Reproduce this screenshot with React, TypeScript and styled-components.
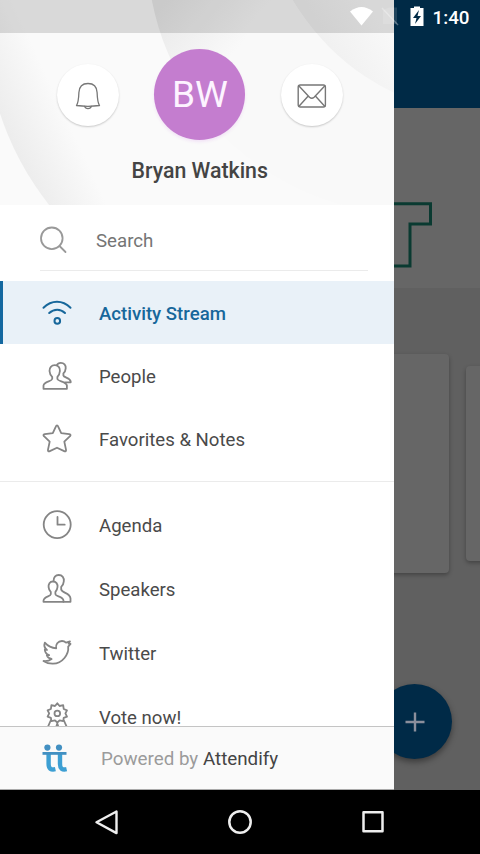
import React from "react";
import styled, { createGlobalStyle } from "styled-components";

const GlobalStyle = createGlobalStyle`
  * { box-sizing: border-box; }
  body { margin: 0; background: #000; font-family: Roboto, sans-serif; }
`;

const Phone = styled.div`
  display: flex;
  flex-direction: column;
  width: 480px;
  height: 854px;
  overflow: hidden;
  background: #000;
`;

const Screen = styled.div`
  position: relative;
  height: 790px;
  overflow: hidden;
`;

/* Dimmed page under the drawer */
const Page = styled.main`
  display: flex;
  flex-direction: column;
  height: 100%;
  background: #606060;
`;

const AppBar = styled.div`
  flex: 0 0 108px;
  background: #002a46;
`;

const Banner = styled.div`
  display: flex;
  flex: 0 0 180px;
  justify-content: flex-end;
  align-items: flex-start;
  padding: 94px 47px 0 0;
  background: #666;
`;

const Cards = styled.div`
  display: flex;
  align-items: flex-start;
  gap: 17px;
  width: 560px;
  padding: 66px 0 0 49px;
`;

const Card = styled.div<{ $small?: boolean }>`
  flex: 0 0 ${(p) => (p.$small ? 300 : 400)}px;
  height: ${(p) => (p.$small ? 195 : 219)}px;
  margin-top: ${(p) => (p.$small ? 12 : 0)}px;
  border-radius: 4px;
  background: #666;
  box-shadow: 0 2px 4px rgba(0, 0, 0, 0.3);
`;

const Fab = styled.div`
  position: absolute;
  left: 377px;
  top: 684px;
  display: flex;
  align-items: center;
  justify-content: center;
  width: 75px;
  height: 75px;
  border-radius: 50%;
  background: #002a47;
  box-shadow: 0 3px 6px rgba(0, 0, 0, 0.4);
`;

const Drawer = styled.aside`
  position: absolute;
  left: 0;
  top: 0;
  display: flex;
  flex-direction: column;
  width: 394.4px;
  height: 790px;
  background: #fff;
`;

const Profile = styled.header`
  position: relative;
  flex: 0 0 205px;
  display: flex;
  flex-direction: column;
  align-items: center;
  padding-top: 49px;
  background: #fafafa;
  overflow: hidden;
`;

const Swirl = styled.svg`
  position: absolute;
  left: 0;
  top: 0;
`;

const ProfileRow = styled.div`
  position: relative;
  display: flex;
  align-items: center;
  gap: 35.5px;
  margin-left: 5.6px;
`;

const RoundButton = styled.button`
  display: flex;
  align-items: center;
  justify-content: center;
  width: 62px;
  height: 62px;
  margin-top: 1px;
  padding: 1px 0 0;
  border: 0;
  border-radius: 50%;
  background: #fff;
  box-shadow: 0 1px 2px rgba(0, 0, 0, 0.2);
`;

const Avatar = styled.div`
  display: flex;
  align-items: center;
  justify-content: center;
  width: 91px;
  height: 91px;
  border-radius: 50%;
  background: #c47dcf;
  box-shadow: 0 2px 3px rgba(240, 222, 245, 0.8);
  color: #fdf3ff;
  font-size: 37px;
  line-height: 1;
`;

const UserName = styled.div`
  position: relative;
  margin: 17.5px 0 0 5px;
  color: #444;
  font-size: 21.3px;
  line-height: 26px;
  font-weight: 500;
`;

const SearchRow = styled.div`
  display: flex;
  align-items: center;
  flex: 0 0 66px;
  margin: 0 26px 10px 40px;
  padding-top: 5px;
  border-bottom: 1.5px solid #ebebeb;
  color: #757575;
  font-size: 18.7px;
`;

const SearchIcon = styled.span`
  display: flex;
  width: 56px;
`;

const Group = styled.nav<{ $second?: boolean }>`
  display: flex;
  flex-direction: column;
  flex: ${(p) => (p.$second ? "0 0 245px" : "0 0 201px")};
  padding-top: ${(p) => (p.$second ? 11 : 0)}px;
  border-bottom: ${(p) => (p.$second ? "1px solid #c4c4c4" : "1.5px solid #ebebeb")};
  overflow: hidden;
`;

const Item = styled.a<{ $active?: boolean; $height: number }>`
  display: flex;
  flex: 0 0 ${(p) => p.$height}px;
  align-items: center;
  padding-left: ${(p) => (p.$active ? 39 : 42)}px;
  border-left: ${(p) => (p.$active ? "3px solid #1468a0" : "0")};
  background: ${(p) => (p.$active ? "#e9f1f8" : "transparent")};
  color: ${(p) => (p.$active ? "#17679b" : "#4a4a4a")};
  font-size: 18.6px;
  font-weight: ${(p) => (p.$active ? 500 : 400)};
`;

const ItemIcon = styled.span`
  display: flex;
  width: 57px;
`;

const ItemLabel = styled.span<{ $drop: number }>`
  padding-top: ${(p) => p.$drop}px;
`;

const Footer = styled.footer`
  display: flex;
  flex: 1;
  align-items: center;
  padding: 1px 0 0 42px;
  border-bottom: 1px solid #aaa;
  background: #fafafa;
  color: #9b9b9b;
  font-size: 18.8px;
`;

const LogoBox = styled.span`
  display: flex;
  width: 59px;
`;

const Brand = styled.span`
  color: #444;
`;

const StatusBar = styled.div`
  position: absolute;
  left: 0;
  top: 0;
  display: flex;
  width: 394.4px;
  height: 33px;
  background: rgba(0, 0, 0, 0.13);
`;

const StatusIcons = styled.div`
  position: absolute;
  right: 10.5px;
  top: 0;
  display: flex;
  align-items: center;
  height: 34px;
  color: #fff;
  font-size: 18.8px;
  font-weight: 500;
`;

const Clock = styled.span`
  margin-left: 6.5px;
  padding-top: 1px;
`;

const NavBar = styled.div`
  display: flex;
  flex: 0 0 64px;
  align-items: center;
  justify-content: space-between;
  padding: 0 94px;
`;

const Line = ({ children, w = 30, h = 30, color = "#858585", sw = 1.8 }: {
  children: React.ReactNode; w?: number; h?: number; color?: string; sw?: number;
}) => (
  <svg width={w} height={h} viewBox={`0 0 ${w} ${h}`} fill="none" stroke={color}
    strokeWidth={sw} strokeLinecap="round" strokeLinejoin="round">
    {children}
  </svg>
);

const StreamIcon = () => (
  <Line color="#17679b" sw={2}>
    <path d="M1.5 9.7C9.5 1.8 20.5 1.8 28.5 9.7" />
    <path d="M7.2 15C12 10.5 18.5 10.5 23 15" />
    <circle cx="15.3" cy="22.9" r="2.8" />
  </Line>
);

const PeopleIcon = () => (
  <Line>
    <path d="M12.8 4.2C16.2 4.2 18.2 6.5 17.9 10C17.7 12.8 16.7 14.7 15.4 15.9V18C15.7 20.4 24.3 20.6 24.9 24.5V27.8H1.5V24.5C2 20.6 9.9 20.4 10.2 18V15.9C8.7 14.6 7.7 12.8 7.5 10C7.3 6.5 9.5 4.2 12.8 4.2Z" />
    <path d="M14.7 4.4C15.5 2.7 16.8 1.8 18.8 1.8C22 1.8 24 4.2 23.7 7.3C23.5 9.8 22.6 11.3 21.4 12.4V14.5C21.8 16.7 28.4 16.9 28.7 20.6V21.3H23" />
  </Line>
);

const StarIcon = () => (
  <Line>
    <path d="M15 1.3C15.6 1.3 16 2.1 16.3 2.9L19.2 9.2L27.2 10.2C28.9 10.5 28.8 11.5 28 12.2L22.3 17.6L24 25.6C24.3 27.3 23.4 27.8 22.2 27.1L15 23.7L7.8 27.1C6.6 27.8 5.7 27.3 6 25.6L7.7 17.6L2 12.2C1.2 11.5 1.1 10.5 2.8 10.2L10.8 9.2L13.7 2.9C14 2.1 14.4 1.3 15 1.3Z" />
  </Line>
);

const ClockIcon = () => (
  <Line>
    <circle cx="15.2" cy="14.6" r="13.5" />
    <path d="M15.5 7V14.7H22.7" />
  </Line>
);

const SpeakersIcon = () => (
  <Line>
    <path d="M10.9 7.5C14.2 7.5 15.9 10 15.5 13.2C15.2 15.5 14.4 17 13.4 18V20.3C13.6 22.7 21.4 22.3 21.5 26.8V27.8H1.5V26.8C1.8 22.3 8.6 22.7 8.8 20.3V18C7.6 17 6.8 15.5 6.6 13.2C6.3 10 7.7 7.5 10.9 7.5Z" />
    <path d="M11.6 7C11.5 3.3 13.5 1 16.7 1C20.3 1 22.3 3.8 21.8 7.3C21.5 10.1 20.5 11.8 19.2 12.9V15.5C20 19.3 28 18.8 28.5 24.3V27.8H21.5" />
  </Line>
);

const TwitterIcon = () => (
  <Line>
    <path d="M2.8 4.7C5.9 8.2 9.8 10.1 14.2 10.3C13.3 6.7 15.9 3 20 3C21.8 3 23.1 3.8 24 4.6L28 3.4L26.6 5.7L28.5 6L26.2 8.7C27 16.2 20.5 25.7 11 25.7C7.3 25.8 4 24.8 1.5 23C4.8 23.4 7.4 22.7 9.6 21C7 20.7 5.5 19.3 4.8 17.3L7.1 17.2C4.2 16.1 2.7 14 2.8 11.3L5 11.9C2.5 10 1.7 7.6 2.8 4.7Z" />
  </Line>
);

const BadgeIcon = () => (
  <Line>
    <path d="M15.3 1.3L17.6 4L21.2 3.2L21.7 7L25 8.3L23.4 11.4L25 14.6L21.7 15.8L21.2 19.2L17.6 18.3L15.3 20.5L13 18.3L9.4 19.2L8.9 15.8L5.6 14.6L7.2 11.4L5.6 8.3L8.9 7L9.4 3.2L13 4Z" />
    <circle cx="15.3" cy="11.4" r="2.8" />
    <path d="M8.7 18.5L5 27L10 25L12.5 30L15.3 21.5L18 30L20.7 25L25.7 27L21.9 18.5" />
  </Line>
);

const items1 = [
  { label: "Activity Stream", icon: <StreamIcon />, active: true },
  { label: "People", icon: <PeopleIcon /> },
  { label: "Favorites & Notes", icon: <StarIcon /> },
];
const items2 = [
  { label: "Agenda", icon: <ClockIcon /> },
  { label: "Speakers", icon: <SpeakersIcon /> },
  { label: "Twitter", icon: <TwitterIcon /> },
  { label: "Vote now!", icon: <BadgeIcon /> },
];

export default function App() {
  return (
    <>
      <GlobalStyle />
      <Phone>
        <Screen>
          <Page>
            <AppBar />
            <Banner>
              <svg width="60" height="68" fill="none" stroke="#0a3a31" strokeWidth="3">
                <path d="M0 1.8H57.5V22H37V64H0" />
              </svg>
            </Banner>
            <Cards>
              <Card />
              <Card $small />
            </Cards>
          </Page>
          <Fab>
            <svg width="20" height="20" stroke="#8b8f9c" strokeWidth="2.4">
              <path d="M10 0.5V19.5M0.5 10H19.5" />
            </svg>
          </Fab>
          <Drawer>
            <Profile>
              <Swirl width="395" height="205">
                <defs>
                  <linearGradient id="bandA" gradientUnits="userSpaceOnUse" x1="-10" y1="110" x2="50" y2="82">
                    <stop offset="0" stopColor="#ebebeb" />
                    <stop offset="1" stopColor="#fafafa" />
                  </linearGradient>
                  <linearGradient id="bandB" gradientUnits="userSpaceOnUse" x1="150" y1="20" x2="215" y2="75">
                    <stop offset="0" stopColor="#e9e9e9" />
                    <stop offset="1" stopColor="#f9f9f9" />
                  </linearGradient>
                  <linearGradient id="bandC" gradientUnits="userSpaceOnUse" x1="310" y1="40" x2="375" y2="0">
                    <stop offset="0" stopColor="#efefef" />
                    <stop offset="1" stopColor="#f9f9f9" />
                  </linearGradient>
                </defs>
                <circle cx="284" cy="20" r="299" fill="url(#bandA)" />
                <circle cx="411" cy="-50" r="264" fill="url(#bandB)" />
                <circle cx="496" cy="-120" r="236" fill="url(#bandC)" />
              </Swirl>
              <ProfileRow>
                <RoundButton aria-label="Notifications">
                  <Line w={26} h={28} color="#777" sw={1.3}>
                    <path d="M1.5 23.5C3.5 20.5 3.7 16 3.9 10.5C4.2 5 7.5 1.5 13 1.5S21.8 5 22.1 10.5C22.3 16 22.5 20.5 24.5 23.5C18 24.4 8 24.4 1.5 23.5Z" />
                    <path d="M9.7 24.4C10.5 27.3 15.5 27.3 16.3 24.4" />
                  </Line>
                </RoundButton>
                <Avatar>BW</Avatar>
                <RoundButton aria-label="Messages">
                  <Line w={30} h={26} color="#777" sw={1.4}>
                    <rect x="1.2" y="2" width="27.2" height="22" rx="2" />
                    <path d="M2 3L12.5 14.2Q14.8 16.2 17.1 14.2L27.7 3M2 23.2L11 13.2M27.7 23.2L18.6 13.2" />
                  </Line>
                </RoundButton>
              </ProfileRow>
              <UserName>Bryan Watkins</UserName>
            </Profile>
            <SearchRow>
              <SearchIcon>
                <Line w={28} h={28} color="#999" sw={1.8}>
                  <circle cx="11.8" cy="12.3" r="10.8" />
                  <path d="M19.5 20L25.5 26" />
                </Line>
              </SearchIcon>
              <ItemLabel $drop={1}>Search</ItemLabel>
            </SearchRow>
            <Group>
              {items1.map((i) => (
                <Item key={i.label} $active={i.active} $height={63}>
                  <ItemIcon>{i.icon}</ItemIcon>
                  <ItemLabel $drop={2}>{i.label}</ItemLabel>
                </Item>
              ))}
            </Group>
            <Group $second>
              {items2.map((i) => (
                <Item key={i.label} $height={64}>
                  <ItemIcon>{i.icon}</ItemIcon>
                  <ItemLabel $drop={2}>{i.label}</ItemLabel>
                </Item>
              ))}
            </Group>
            <Footer>
              <LogoBox>
                <svg width="27" height="30" fill="none" stroke="#3d9fd3" strokeWidth="4.4">
                  <circle cx="5.4" cy="3.6" r="3.1" fill="#4290c2" stroke="none" />
                  <circle cx="17" cy="3.6" r="3.1" fill="#4290c2" stroke="none" />
                  <path d="M6.6 8V20C6.6 24.5 8.8 26.2 13.4 25.2M18 8V20C18 24.5 20.2 26.2 24.6 25.2" />
                  <path d="M0.5 9.4H24.5" stroke="#4290c2" strokeWidth="2.8" />
                </svg>
              </LogoBox>
              <span>Powered by <Brand>Attendify</Brand></span>
            </Footer>
          </Drawer>
          <StatusBar />
          <StatusIcons>
            <svg width="77" height="24" viewBox="0 0 77 24">
              <path d="M1 6.5Q12.5 -2.5 24 6.5L12.5 20.5Z" fill="#fff" />
              <path d="M36 4L40 2.5H48V19H34V6Z" fill="#fff" opacity=".13" />
              <path d="M33 3L49 20" stroke="#fff" strokeWidth="1.5" opacity=".3" />
              <path d="M65 3V1.5H71V3H74.5V21H61.5V3Z" fill="#fff" />
              <path d="M70 5L64 13H67.5L66 19L72 11H68.5Z" fill="#002a46" />
            </svg>
            <Clock>1:40</Clock>
          </StatusIcons>
        </Screen>
        <NavBar>
          <Line w={26} h={28} color="#eee" sw={2.4}>
            <path d="M2.5 14.3L22.5 3.5V25.1Z" />
          </Line>
          <Line w={26} h={26} color="#eee" sw={2.5}>
            <circle cx="13" cy="13" r="10.7" />
          </Line>
          <Line w={26} h={26} color="#eee" sw={2.5}>
            <rect x="3.5" y="3.2" width="19" height="19" />
          </Line>
        </NavBar>
      </Phone>
    </>
  );
}
